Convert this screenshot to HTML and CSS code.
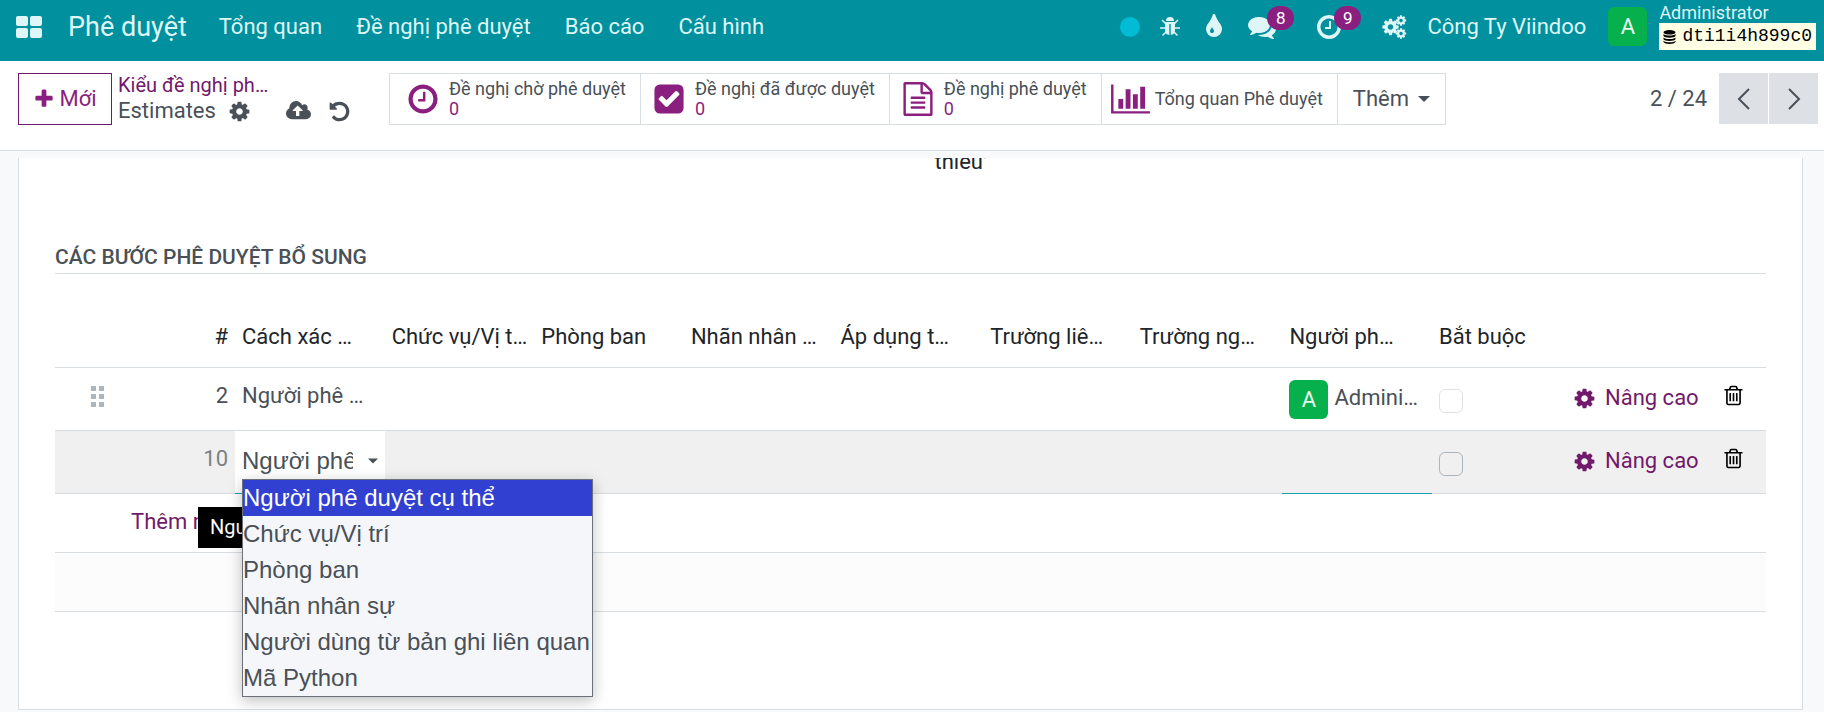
FILE: index.html
```
<!DOCTYPE html>
<html lang="vi">
	<head>
		<meta charset="UTF-8">
		<meta name="viewport" content="width=device-width, initial-scale=1">
		<title>Phê duyệt - Estimates</title>
		<link rel="stylesheet" href="styles.css">
	</head>
	<body>
		<!-- icon sprite -->
		<svg class="sprite" aria-hidden="true">
			<symbol id="i-cog" viewBox="0 0 1792 1792"><path d="M1152 896q0-106-75-181t-181-75-181 75-75 181 75 181 181 75 181-75 75-181zm512-109v222q0 12-8 23t-20 13l-185 28q-19 54-39 91 35 50 107 138 10 12 10 25t-9 23q-27 37-99 108t-94 71q-12 0-26-9l-138-108q-44 23-91 38-16 136-29 186-7 28-36 28h-222q-14 0-24.5-8.5t-11.5-21.5l-28-184q-49-16-90-37l-141 107q-10 9-25 9-14 0-25-11-126-114-165-168-7-10-7-23 0-12 8-23 15-21 51-66.5t54-70.5q-27-50-41-99l-183-27q-13-2-21-12.5t-8-23.5v-222q0-12 8-23t19-13l186-28q14-46 39-92-40-57-107-138-10-12-10-24 0-10 9-23 26-36 98.5-107.5t94.5-71.5q13 0 26 10l138 107q44-23 91-38 16-136 29-186 7-28 36-28h222q14 0 24.5 8.5t11.5 21.5l28 184q49 16 90 37l142-107q9-9 24-9 13 0 25 10 129 119 165 170 7 8 7 22 0 12-8 23-15 21-51 66.5t-54 70.5q26 50 41 98l183 28q13 2 21 12.5t8 23.5z"/></symbol>
			<symbol id="i-cogs" viewBox="0 0 25 23">
				<use href="#i-cog" x="-1" y="2" width="19" height="19"/>
				<use href="#i-cog" x="13" y="-1" width="12" height="12"/>
				<use href="#i-cog" x="13" y="12" width="12" height="12"/>
			</symbol>
			<symbol id="i-plus" viewBox="0 0 1792 1792"><path d="M1600 736v192q0 40-28 68t-68 28h-416v416q0 40-28 68t-68 28h-192q-40 0-68-28t-28-68v-416h-416q-40 0-68-28t-28-68v-192q0-40 28-68t68-28h416v-416q0-40 28-68t68-28h192q40 0 68 28t28 68v416h416q40 0 68 28t28 68z"/></symbol>
			<symbol id="i-clock" viewBox="0 0 1792 1792"><path d="M1024 544v448q0 14-9 23t-23 9h-320q-14 0-23-9t-9-23v-64q0-14 9-23t23-9h224v-352q0-14 9-23t23-9h64q14 0 23 9t9 23zm416 352q0-148-73-273t-198-198-273-73-273 73-198 198-73 273 73 273 198 198 273 73 273-73 198-198 73-273zm224 0q0 209-103 385.5t-279.5 279.5-385.5 103-385.5-103-279.5-279.5-103-385.5 103-385.5 279.5-279.5 385.5-103 385.5 103 279.5 279.5 103 385.5z"/></symbol>
			<symbol id="i-check" viewBox="0 0 1792 1792"><path d="M813 1299l614-614q19-19 19-45t-19-45l-102-102q-19-19-45-19t-45 19l-467 467-211-211q-19-19-45-19t-45 19l-102 102q-19 19-19 45t19 45l358 358q19 19 45 19t45-19zm851-883v960q0 119-84.5 203.5t-203.5 84.5h-960q-119 0-203.5-84.5t-84.5-203.5v-960q0-119 84.5-203.5t203.5-84.5h960q119 0 203.5 84.5t84.5 203.5z"/></symbol>
			<symbol id="i-file" viewBox="0 0 1792 1792"><path d="M1596 380q28 28 48 76t20 88v1152q0 40-28 68t-68 28h-1344q-40 0-68-28t-28-68v-1600q0-40 28-68t68-28h896q40 0 88 20t76 48zm-444-244v376h376q-10-29-22-41l-313-313q-12-12-41-22zm384 1528v-1024h-416q-40 0-68-28t-28-68v-416h-768v1536h1280zm-1024-864q0-14 9-23t23-9h704q14 0 23 9t9 23v64q0 14-9 23t-23 9h-704q-14 0-23-9t-9-23v-64zm736 224q14 0 23 9t9 23v64q0 14-9 23t-23 9h-704q-14 0-23-9t-9-23v-64q0-14 9-23t23-9h704zm0 256q14 0 23 9t9 23v64q0 14-9 23t-23 9h-704q-14 0-23-9t-9-23v-64q0-14 9-23t23-9h704z"/></symbol>
			<symbol id="i-chart" viewBox="0 0 2048 1792"><path d="M640 896v512H384V896zM1024 384v1024H768V384zM2048 1536v128H0V128h128v1408zM1408 640v768h-256V640zM1792 256v1152h-256V256z"/></symbol>
			<symbol id="i-undo" viewBox="0 0 1792 1792"><path d="M1664 896q0 156-61 298t-164 245-245 164-298 61q-172 0-327-72.5t-264-204.5q-7-10-6.5-22.5t8.5-20.5l137-138q10-9 25-9 16 2 23 12 73 95 179 147t225 52q104 0 198.5-40.5t163.5-109.5 109.5-163.5 40.5-198.5-40.5-198.5-109.5-163.5-163.5-109.5-198.5-40.5q-98 0-188 35.5t-160 101.5l137 138q31 30 14 69-17 40-59 40h-448q-26 0-45-19t-19-45v-448q0-42 40-59 39-17 69 14l130 129q107-101 244.5-156.5t284.5-55.5q156 0 298 61t245 164 164 245 61 298z"/></symbol>
			<symbol id="i-cloud" viewBox="0 0 1920 1792"><path d="M1280 864q0-14-9-23l-352-352q-9-9-23-9t-23 9l-351 351q-10 12-10 24 0 14 9 23t23 9h224v352q0 13 9.5 22.5t22.5 9.5h192q13 0 22.5-9.5t9.5-22.5v-352h224q13 0 22.5-9.5t9.5-22.5zm640 288q0 159-112.5 271.5t-271.5 112.5h-1088q-185 0-316.5-131.5t-131.5-316.5q0-130 70-240t188-165q-2-30-2-43 0-212 150-362t362-150q156 0 285.5 87t188.5 231q71-62 166-62 106 0 181 75t75 181q0 76-41 138 130 31 213.5 135.5t83.5 238.5z"/></symbol>
			<symbol id="i-trash" viewBox="0 0 1792 1792"><path d="M704 736v576q0 14-9 23t-23 9h-64q-14 0-23-9t-9-23v-576q0-14 9-23t23-9h64q14 0 23 9t9 23zm256 0v576q0 14-9 23t-23 9h-64q-14 0-23-9t-9-23v-576q0-14 9-23t23-9h64q14 0 23 9t9 23zm256 0v576q0 14-9 23t-23 9h-64q-14 0-23-9t-9-23v-576q0-14 9-23t23-9h64q14 0 23 9t9 23zm128 724v-948h-896v948q0 22 7 40.5t14.5 27 10.5 8.5h832q3 0 10.5-8.5t14.5-27 7-40.5zm-672-1076h448l-48-117q-7-9-17-11h-317q-10 2-17 11zm928 32v64q0 14-9 23t-23 9h-96v948q0 83-47 143.5t-113 60.5h-832q-66 0-113-58.5t-47-141.5v-952h-96q-14 0-23-9t-9-23v-64q0-14 9-23t23-9h309l70-167q15-37 54-63t79-26h320q40 0 79 26t54 63l70 167h309q14 0 23 9t9 23z"/></symbol>
			<symbol id="i-comments" viewBox="0 0 1792 1792"><path d="M1408 768q0 139-94 257t-256.5 186.5-353.5 68.5q-86 0-176-16-124 88-278 128-36 9-86 16h-3q-11 0-20.5-8t-11.5-21q-1-3-1-6.5t.5-6.5 2-6l2.5-5 3.5-5.5 4-5 4.5-5 4-4.5q5-6 23-25t26-29.5 22.5-29 25-38.5 20.5-44q-124-72-195-177t-71-224q0-139 94-257t256.5-186.5 353.5-68.5 353.5 68.5 256.5 186.5 94 257zm384 256q0 120-71 224.5t-195 176.5q10 24 20.5 44t25 38.5 22.5 29 26 29.5 23 25q1 1 4 4.5t4.5 5 4 5 3.5 5.5l2.5 5 2 6 .5 6.5-1 6.5q-3 14-13 22t-22 7q-50-7-86-16-154-40-278-128-90 16-176 16-271 0-472-132 58 4 88 4 161 0 309-45t264-129q125-92 192-212t67-254q0-77-23-152 129 71 204 178t75 230z"/></symbol>
			<symbol id="i-tint" viewBox="0 0 1792 1792"><path d="M896 1152q0-36-20-69-1-1-15.5-22.5t-25.5-38-25-44-21-50.5q-4-16-21-16t-21 16q-7 23-21 50.5t-25 44-25.5 38-15.5 22.5q-20 33-20 69 0 53 37.5 90.5t90.5 37.5 90.5-37.5 37.5-90.5zm512-128q0 212-150 362t-362 150-362-150-150-362q0-145 81-275 6-9 62.5-90.5t101-151 99.5-178 83-201.5q9-30 34-47t51-17 51.5 17 33.5 47q28 93 83 201.5t99.5 178 101 151 62.5 90.5q81 127 81 275z"/></symbol>
			<symbol id="i-bug" viewBox="0 0 20 20">
				<path d="M6 4a4 4 0 0 1 8 0z"/>
				<path d="M5 5h10v8.500a4.800 4.800 0 0 1-4.300 4.500V7H9.300v11A4.800 4.800 0 0 1 5 13.500z"/>
				<path d="M2 3l4 4M18 3l-4 4M0 11h5M20 11h-5M2.500 18.500L6 15M17.500 18.500L14 15" fill="none" stroke="currentColor" stroke-width="1.500"/>
			</symbol>
			<symbol id="i-db" viewBox="0 0 13 14">
				<ellipse cx="6.500" cy="2.300" rx="6" ry="2.300"/>
				<path d="M.5 4c2 2 10 2 12 0v2c-1 2.300-11 2.300-12 0zM.5 7.500c2 2 10 2 12 0v1.800c-1 2.300-11 2.300-12 0zM.5 10.800c2 2 10 2 12 0v1.200c-1 2.600-11 2.600-12 0z"/>
			</symbol>
			<symbol id="i-apps" viewBox="0 0 26 22">
				<rect width="12" height="10" rx="2"/><rect x="14" width="12" height="10" rx="2"/>
				<rect y="12" width="12" height="10" rx="2"/><rect x="14" y="12" width="12" height="10" rx="2"/>
			</symbol>
			<symbol id="i-caret" viewBox="0 0 12 6"><path d="M0 0h12L6 6z"/></symbol>
			<symbol id="i-prev" viewBox="0 0 14 22"><path d="M12 1L2 11l10 10" fill="none" stroke="currentColor" stroke-width="2"/></symbol>
			<symbol id="i-next" viewBox="0 0 14 22"><path d="M2 1l10 10L2 21" fill="none" stroke="currentColor" stroke-width="2"/></symbol>
			<symbol id="i-grip" viewBox="0 0 14 22"><path d="M0 0h5v5H0zM8 0h5v5H8zM0 8h5v5H0zM8 8h5v5H8zM0 16h5v5H0zM8 16h5v5H8z"/></symbol>
		</svg>

		<header class="navbar">
			<button class="apps" type="button" aria-label="Ứng dụng"><svg><use href="#i-apps"/></svg></button>
			<a class="brand" href="#">Phê duyệt</a>
			<nav class="menu">
				<a href="#">Tổng quan</a>
				<a href="#">Đề nghị phê duyệt</a>
				<a href="#">Báo cáo</a>
				<a href="#">Cấu hình</a>
			</nav>
			<div class="systray">
				<span class="dot"></span>
				<button type="button" aria-label="Gỡ lỗi"><svg class="icon20"><use href="#i-bug"/></svg></button>
				<button type="button" aria-label="Giao diện"><svg class="icon28"><use href="#i-tint"/></svg></button>
				<button class="has-badge" type="button" aria-label="Tin nhắn"><svg class="icon28"><use href="#i-comments"/></svg><span class="badge">8</span></button>
				<button class="has-badge" type="button" aria-label="Hoạt động"><svg class="icon28"><use href="#i-clock"/></svg><span class="badge">9</span></button>
				<button class="settings" type="button" aria-label="Cài đặt"><svg class="icon24"><use href="#i-cogs"/></svg></button>
				<a class="company" href="#">Công Ty Viindoo</a>
				<span class="avatar">A</span>
				<div class="user">
					<span>Administrator</span>
					<span class="db"><svg><use href="#i-db"/></svg>dti1i4h899c0</span>
				</div>
			</div>
		</header>

		<div class="control-panel">
			<button class="btn-new" type="button"><svg><use href="#i-plus"/></svg>Mới</button>
			<div class="breadcrumb">
				<a href="#">Kiểu đề nghị phê duyệt</a>
				<div class="current">
					<span>Estimates</span>
					<button type="button" aria-label="Hành động"><svg class="icon22"><use href="#i-cog"/></svg></button>
					<button class="save" type="button" aria-label="Lưu"><svg class="icon24"><use href="#i-cloud"/></svg></button>
					<button class="discard" type="button" aria-label="Huỷ bỏ"><svg class="icon22"><use href="#i-undo"/></svg></button>
				</div>
			</div>
			<div class="stats">
				<button class="stat first" type="button"><svg><use href="#i-clock"/></svg><span>Đề nghị chờ phê duyệt<b>0</b></span></button>
				<button class="stat" type="button"><svg><use href="#i-check"/></svg><span>Đề nghị đã được duyệt<b>0</b></span></button>
				<button class="stat" type="button"><svg><use href="#i-file"/></svg><span>Đề nghị phê duyệt<b>0</b></span></button>
				<button class="stat chart" type="button"><svg><use href="#i-chart"/></svg><span>Tổng quan Phê duyệt</span></button>
				<button class="stat more" type="button">Thêm<svg><use href="#i-caret"/></svg></button>
			</div>
			<div class="pager">
				<span>2 / 24</span>
				<button type="button" aria-label="Trước"><svg><use href="#i-prev"/></svg></button>
				<button type="button" aria-label="Tiếp"><svg><use href="#i-next"/></svg></button>
			</div>
		</div>

		<main class="content">
			<div class="scroller">
				<div class="sheet">
					<div class="group">
						<div></div>
						<div class="help">thiếu'</div>
					</div>
					<h2>Các bước phê duyệt bổ sung</h2>
					<table class="steps">
						<colgroup>
							<col class="c-handle"><col class="c-seq">
							<col><col><col><col><col><col><col><col>
							<col class="c-required"><col class="c-advanced"><col class="c-trash">
						</colgroup>
						<thead>
							<tr>
								<th></th>
								<th class="num">#</th>
								<th class="sortable">Cách xác định</th>
								<th>Chức vụ/Vị trí công việc</th>
								<th>Phòng ban</th>
								<th>Nhãn nhân sự</th>
								<th class="sortable">Áp dụng theo</th>
								<th class="sortable">Trường liên quan</th>
								<th class="sortable">Trường người dùng</th>
								<th class="sortable">Người phê duyệt</th>
								<th>Bắt buộc</th>
								<th></th>
								<th></th>
							</tr>
						</thead>
						<tbody>
							<tr>
								<td class="handle"><svg><use href="#i-grip"/></svg></td>
								<td class="num">2</td>
								<td class="method">Người phê duyệt cụ thể</td>
								<td></td><td></td><td></td><td></td><td></td><td></td>
								<td class="person"><span class="avatar">A</span>Administrator</td>
								<td class="check"><input type="checkbox" aria-label="Bắt buộc" disabled></td>
								<td class="advanced"><button type="button"><svg class="icon22"><use href="#i-cog"/></svg>Nâng cao</button></td>
								<td class="trash"><button type="button" aria-label="Xoá"><svg class="icon22"><use href="#i-trash"/></svg></button></td>
							</tr>
							<tr class="editing">
								<td></td>
								<td class="num">10</td>
								<td class="field">
									<div class="select-box">
										<select aria-label="Cách xác định">
											<option>Người phê duyệt cụ thể</option>
											<option>Chức vụ/Vị trí</option>
											<option>Phòng ban</option>
											<option>Nhãn nhân sự</option>
											<option>Người dùng từ bản ghi liên quan</option>
											<option>Mã Python</option>
										</select>
										<svg class="arrow"><use href="#i-caret"/></svg>
										<div class="tooltip">Người phê duyệt cụ thể</div>
										<ul class="options">
											<li class="active">Người phê duyệt cụ thể</li>
											<li>Chức vụ/Vị trí</li>
											<li>Phòng ban</li>
											<li>Nhãn nhân sự</li>
											<li>Người dùng từ bản ghi liên quan</li>
											<li>Mã Python</li>
										</ul>
									</div>
								</td>
								<td></td><td></td><td></td><td></td><td></td><td></td>
								<td class="required"></td>
								<td class="check"><input type="checkbox" aria-label="Bắt buộc"></td>
								<td class="advanced"><button type="button"><svg class="icon22"><use href="#i-cog"/></svg>Nâng cao</button></td>
								<td class="trash"><button type="button" aria-label="Xoá"><svg class="icon22"><use href="#i-trash"/></svg></button></td>
							</tr>
							<tr class="add">
								<td colspan="13"><a href="#">Thêm một dòng</a></td>
							</tr>
							<tr class="empty">
								<td colspan="13"></td>
							</tr>
						</tbody>
					</table>
				</div>
			</div>
		</main>
	</body>
</html>
```

FILE: styles.css
```
*{
	box-sizing: border-box;
}
body{
	margin: 0;
	background: #f8f9fb;
	color: #495057;
	font-family: Roboto, "Noto Sans", sans-serif;
	font-size: 22px;
	line-height: 32px;
}
a{
	color: inherit;
	text-decoration: none;
}
button{
	margin: 0;
	padding: 0;
	border: 0;
	background: none;
	color: inherit;
	font: inherit;
	cursor: pointer;
}
svg{
	display: block;
	flex: none;
	fill: currentColor;
}
.sprite{
	position: absolute;
	width: 0;
	height: 0;
}
.icon20{ width: 20px; height: 20px; }
.icon22{ width: 23px; height: 23px; }
.icon24{ width: 25px; height: 24px; }
.icon28{ width: 28px; height: 28px; }

/* navbar */
.navbar{
	display: flex;
	align-items: center;
	height: 61px;
	padding: 0 8px 8px 16px;
	background: #00909e;
	color: #dff6f7;
	white-space: nowrap;
}
.apps svg{
	width: 26px;
	height: 22px;
}
.brand{
	margin-left: 26px;
	font-size: 27px;
}
.menu{
	display: flex;
	gap: 34px;
	margin-left: 32px;
}
.systray{
	display: flex;
	align-items: center;
	margin-left: auto;
}
.dot{
	width: 20px;
	height: 20px;
	margin-right: 20px;
	border-radius: 50%;
	background: #00bcd4;
}
.systray .icon28{
	margin-left: 20px;
}
.has-badge{
	position: relative;
	margin-right: 19px;
}
.badge{
	position: absolute;
	top: -7px;
	left: 39px;
	min-width: 27px;
	padding: 0 8px;
	border-radius: 12px;
	background: #8a1f80;
	color: #fff;
	font-size: 17px;
	line-height: 24px;
}
.settings{
	margin-left: 20px;
}
.company{
	margin-left: 20px;
}
.avatar{
	width: 39px;
	height: 39px;
	border-radius: 6px;
	background: #06b04c;
	color: #e9f9ef;
	line-height: 39px;
	text-align: center;
}
.systray .avatar{
	margin: 0 12px 0 22px;
}
.user{
	display: flex;
	flex-direction: column;
	font-size: 18px;
	line-height: 20px;
}
.db{
	display: flex;
	align-items: center;
	gap: 6px;
	padding: 0 4px;
	background: #ffffe6;
	color: #000;
	font-family: "Liberation Mono", monospace;
	line-height: 27px;
}
.db svg{
	width: 13px;
	height: 14px;
}

/* control panel */
.control-panel{
	display: flex;
	align-items: flex-start;
	padding: 12px 6px 25px 18px;
	border-bottom: 1px solid #d8dde2;
	background: #fff;
	white-space: nowrap;
}
.btn-new{
	display: flex;
	align-items: center;
	justify-content: center;
	gap: 4px;
	width: 94px;
	height: 52px;
	border: 1px solid #71196b;
	color: #8a1f80;
}
.btn-new svg{
	width: 22px;
	height: 22px;
}
.breadcrumb{
	width: 277px;
	padding-left: 6px;
}
.breadcrumb a{
	display: block;
	width: 154px;
	overflow: hidden;
	text-overflow: ellipsis;
	color: #71196b;
	font-size: 20px;
	line-height: 24px;
}
.current{
	display: flex;
	align-items: center;
	line-height: 28px;
}
.current button{
	margin-left: 12px;
}
.current .save{
	margin-left: 35px;
}
.current .discard{
	margin-left: 17px;
}
.stats{
	display: flex;
	height: 52px;
	border: 1px solid #d8dde2;
}
.stat{
	display: flex;
	align-items: center;
	gap: 9px;
	padding: 0 14px 0 11px;
	border-left: 1px solid #d8dde2;
	font-size: 18px;
	line-height: 20px;
	text-align: left;
}
.stat svg{
	width: 34px;
	height: 34px;
	color: #8a1f80;
}
.stat b{
	display: block;
	color: #8a1f80;
	font-weight: normal;
}
.stat.first{
	padding-left: 16px;
	border-left: 0;
}
.stat.chart{
	gap: 5px;
	padding-left: 9px;
}
.stat.chart svg{
	width: 39px;
}
.stat.more{
	padding: 0 15px;
	font-size: 22px;
}
.stat.more svg{
	width: 12px;
	height: 6px;
	color: inherit;
}
.pager{
	display: flex;
	align-items: center;
	gap: 1px;
	margin-left: auto;
}
.pager span{
	margin-right: 11px;
}
.pager button{
	display: flex;
	align-items: center;
	justify-content: center;
	width: 49px;
	height: 51px;
	background: #dde1e6;
}
.pager svg{
	width: 14px;
	height: 22px;
}

/* form sheet */
.content{
	padding: 7px 21px 0 18px;
}
.scroller{
	overflow: hidden;
}
.sheet{
	padding: 0 36px 97px;
	border: solid #d8dde2;
	border-width: 0 1px 1px;
	background: #fff;
}
.group{
	display: grid;
	grid-template-columns: 1fr 1fr;
	margin-top: -12px;
}
.help{
	padding-left: 24px;
	color: #212529;
}
h2{
	margin: 63px 0 0;
	border-bottom: 1px solid #d8dde2;
	font-size: 21px;
	font-weight: 500;
	line-height: 32px;
	text-transform: uppercase;
}
.steps{
	width: 100%;
	margin-top: 33px;
	border-collapse: separate;
	border-spacing: 0;
	table-layout: fixed;
}
.c-handle{ width: 100px; }
.c-seq{ width: 80px; }
.c-required{ width: 128px; }
.c-advanced{ width: 155px; }
.c-trash{ width: 51px; }
th, td{
	height: 63px;
	padding: 12px 7px 7px;
	overflow: hidden;
	border-bottom: 1px solid #d8dde2;
	text-align: left;
	text-overflow: ellipsis;
	vertical-align: top;
	white-space: nowrap;
}
th{
	height: 61px;
	padding-top: 14px;
	color: #212529;
	font-weight: normal;
}
.sortable{
	padding-right: 27px;
}
.num{
	text-align: right;
}
.method{
	padding-right: 14px;
}
.handle{
	padding: 18px 0 0 36px;
	color: #adb5bd;
}
.handle svg{
	width: 14px;
	height: 22px;
}
.person .avatar{
	display: inline-block;
	margin-right: 6px;
	vertical-align: middle;
}
.check input{
	display: block;
	width: 24px;
	height: 24px;
	margin: 9px 0 0;
	border: 1px solid #dee2e6;
	border-radius: 6px;
	appearance: none;
}
.editing .check input{
	border-color: #adb5bd;
}
.advanced{
	padding-top: 14px;
	padding-left: 13px;
	color: #71196b;
}
.advanced button{
	display: flex;
	align-items: center;
	gap: 9px;
}
.trash{
	color: #000;
}
.trash button{
	padding-top: 4px;
}
.editing td{
	background: #f0f0f0;
}
.editing .num{
	color: #7c8084;
}
.editing .required{
	border-bottom-color: #17a2ac;
}
.editing .field{
	overflow: visible;
	border-bottom-color: #17a2ac;
	background: #fff;
}
.select-box{
	position: relative;
	display: flex;
	align-items: center;
}
.select-box select{
	width: 100%;
	padding: 0 25px 0 0;
	border: 0;
	outline: 0;
	background: none;
	color: #495057;
	font-family: "Liberation Sans", Arial, sans-serif;
	font-size: 24px;
	line-height: 36px;
	appearance: none;
}
.arrow{
	position: absolute;
	right: 0;
	width: 10px;
	height: 6px;
}
.options{
	position: absolute;
	z-index: 2;
	top: 36px;
	left: 0;
	width: 351px;
	margin: 0;
	padding: 0;
	border: 1px solid #6c7078;
	background: #f5f6fa;
	box-shadow: 0 4px 14px rgba(0, 0, 0, 0.25);
	font-family: "Liberation Sans", Arial, sans-serif;
	font-size: 24px;
	line-height: 36px;
	list-style: none;
}
.options .active{
	background: #3240d2;
	color: #fff;
}
.tooltip{
	position: absolute;
	z-index: 1;
	top: 64px;
	left: -44px;
	padding: 0 12px;
	background: #000;
	color: #fff;
	font-size: 20px;
	line-height: 41px;
}
.add td{
	height: 59px;
	padding-left: 76px;
	color: #71196b;
}
.empty td{
	height: 59px;
	background: #fcfcfc;
}
```
